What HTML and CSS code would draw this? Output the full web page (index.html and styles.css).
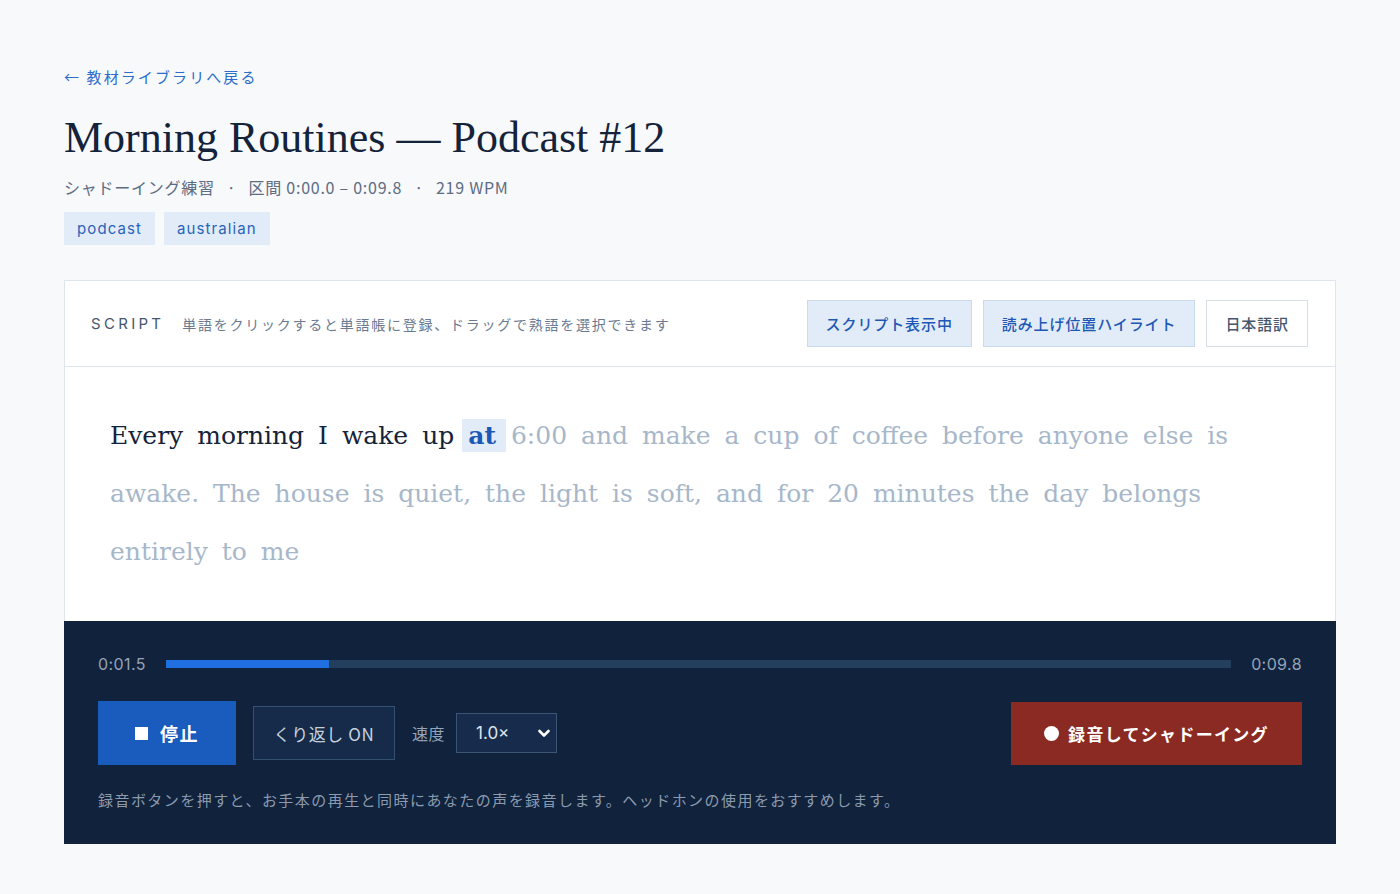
FILE: index.html
```html
<!DOCTYPE html>
<html lang="ja">
<head>
<meta charset="utf-8">
<title>Morning Routines — Podcast #12</title>
<link rel="stylesheet" href="styles.css">
</head>
<body>
<main class="page">
  <a class="back" href="#">← 教材ライブラリへ戻る</a>
  <h1 class="title">Morning Routines — Podcast #12</h1>
  <div class="meta">
    <span>シャドーイング練習</span><span class="dot">·</span><span>区間 0:00.0 – 0:09.8</span><span class="dot">·</span><span>219 WPM</span>
  </div>
  <div class="tags">
    <span class="tag">podcast</span>
    <span class="tag">australian</span>
  </div>

  <section class="card">
    <div class="toolbar">
      <div class="toolbar-left">
        <span class="label">SCRIPT</span>
        <span class="hint">単語をクリックすると単語帳に登録、ドラッグで熟語を選択できます</span>
      </div>
      <div class="toolbar-right">
        <button class="tbtn on">スクリプト表示中</button>
        <button class="tbtn on">読み上げ位置ハイライト</button>
        <button class="tbtn">日本語訳</button>
      </div>
    </div>
    <div class="script">
      <p class="lines"><span class="w done">Every</span> <span class="w done">morning</span> <span class="w done">I</span> <span class="w done">wake</span> <span class="w done">up</span> <span class="w cur">at</span> <span class="w">6:00</span> <span class="w">and</span> <span class="w">make</span> <span class="w">a</span> <span class="w">cup</span> <span class="w">of</span> <span class="w">coffee</span> <span class="w">before</span> <span class="w">anyone</span> <span class="w">else</span> <span class="w">is</span> <span class="w">awake.</span> <span class="w">The</span> <span class="w">house</span> <span class="w">is</span> <span class="w">quiet,</span> <span class="w">the</span> <span class="w">light</span> <span class="w">is</span> <span class="w">soft,</span> <span class="w">and</span> <span class="w">for</span> <span class="w">20</span> <span class="w">minutes</span> <span class="w">the</span> <span class="w">day</span> <span class="w">belongs</span> <span class="w">entirely</span> <span class="w">to</span> <span class="w">me</span></p>
    </div>
    <div class="player">
      <div class="progress-row">
        <span class="time">0:01.5</span>
        <div class="bar"><div class="fill" style="width:15.3%"></div></div>
        <span class="time">0:09.8</span>
      </div>
      <div class="controls">
        <div class="controls-left">
          <button class="pbtn stop"><span class="sq"></span>停止</button>
          <button class="pbtn loop">くり返し ON</button>
          <span class="speed-label">速度</span>
          <div class="select">
            <span>1.0×</span>
            <svg class="chev" width="14" height="14" viewBox="0 0 14 14" aria-hidden="true"><path d="M2.5 5 L7 9.5 L11.5 5" fill="none" stroke="#ffffff" stroke-width="2.6" stroke-linecap="round" stroke-linejoin="round"/></svg>
          </div>
        </div>
        <button class="pbtn rec"><span class="dotc"></span>録音してシャドーイング</button>
      </div>
      <p class="phint">録音ボタンを押すと、お手本の再生と同時にあなたの声を録音します。ヘッドホンの使用をおすすめします。</p>
    </div>
  </section>
</main>
</body>
</html>
```

FILE: styles.css
```css
* { box-sizing: border-box; }
html, body { margin: 0; padding: 0; }
body {
  background: #f7f9fb;
  font-family: "Inter", "Noto Sans CJK JP", "Noto Sans", sans-serif;
  color: #14223a;
}
.page {
  padding: 66px 64px 50px;
}
.back {
  display: block;
  font-size: 15px;
  line-height: 22px;
  color: #2b6ccc;
  text-decoration: none;
  letter-spacing: 2.1px;
  font-family: "Noto Sans CJK JP", sans-serif;
}
.title {
  margin: 23px 0 0;
  font-family: "Liberation Serif", "DejaVu Serif", serif;
  font-weight: 400;
  font-size: 44px;
  line-height: 54px;
  color: #14223a;
  letter-spacing: 0;
}
.meta {
  margin-top: 10px;
  font-size: 16px;
  line-height: 24px;
  color: #5d6c82;
  display: flex;
  align-items: center;
  letter-spacing: 0.75px;
  font-family: "Noto Sans CJK JP", sans-serif;
}
.meta .dot { margin: 0 12px; }
.tags {
  margin-top: 13px;
  display: flex;
  gap: 9px;
}
.tag {
  height: 33px;
  line-height: 33px;
  padding: 0 13px;
  background: #e2ecf8;
  color: #2b63b8;
  font-size: 15px;
  letter-spacing: 1.1px;
  font-family: "Inter", sans-serif;
}
.card {
  margin-top: 35px;
  background: #ffffff;
  border: 1px solid #dfe5ec;
}
.toolbar {
  height: 86px;
  border-bottom: 1px solid #dfe5ec;
  padding: 0 27px 0 26px;
  display: flex;
  align-items: center;
  justify-content: space-between;
}
.toolbar-left {
  display: flex;
  align-items: center;
  gap: 18px;
}
.label {
  font-size: 15px;
  letter-spacing: 3.3px;
  color: #46566d;
  font-family: "Inter", sans-serif;
}
.hint {
  font-size: 14px;
  color: #6b7a90;
  letter-spacing: 1.75px;
  font-family: "Noto Sans CJK JP", sans-serif;
}
.toolbar-right {
  display: flex;
  gap: 11px;
}
.tbtn {
  height: 47px;
  padding: 0 18px;
  font-family: "Noto Sans CJK JP", sans-serif;
  font-size: 15px;
  font-weight: 500;
  letter-spacing: 0.9px;
  background: #ffffff;
  color: #46566d;
  border: 1px solid #d8dee6;
  cursor: pointer;
}
.tbtn.on {
  background: #e2ecf8;
  border-color: #cbd9ec;
  color: #1d58b6;
}
.script {
  padding: 40px 40px 40px 42px;
}
.lines {
  margin: 0;
  font-family: "DejaVu Serif", "Liberation Serif", serif;
  font-size: 25px;
  line-height: 58px;
  color: #a7b7ca;
}
.w {
  padding: 2px 3px;
}
.w.done { color: #14223a; }
.w.cur {
  color: #1d58b6;
  font-weight: 700;
  background: #e2ecf8;
  padding: 2px 10px 2px 6px;
  margin: 0 -6px 0 -3px;
}
.player {
  background: #10223c;
  padding: 32px 34px 33px;
  margin: 0 -1px -1px;
}
.progress-row {
  display: flex;
  align-items: center;
  gap: 20px;
  height: 22px;
}
.time {
  font-size: 16px;
  color: #95a3b6;
  letter-spacing: 0.4px;
  font-family: "Inter", sans-serif;
}
.bar {
  flex: 1;
  height: 8px;
  background: #243e5d;
}
.fill {
  height: 100%;
  background: #1f6fe0;
}
.controls {
  margin-top: 26px;
  display: flex;
  align-items: center;
  justify-content: space-between;
}
.controls-left {
  display: flex;
  align-items: center;
}
.pbtn {
  font-family: "Noto Sans CJK JP", sans-serif;
  border: none;
  cursor: pointer;
  display: flex;
  align-items: center;
  justify-content: center;
}
.stop {
  width: 138px;
  height: 64px;
  background: #1a5bbe;
  color: #ffffff;
  font-size: 18px;
  font-weight: 700;
  gap: 12px;
  letter-spacing: 1.5px;
}
.sq {
  width: 13px;
  height: 13px;
  background: #ffffff;
}
.loop {
  margin-left: 17px;
  width: 142px;
  height: 54px;
  background: #162b49;
  border: 1px solid #34506f;
  color: #c6d1de;
  font-size: 17px;
  letter-spacing: 0.6px;
}
.speed-label {
  margin-left: 17px;
  font-size: 16px;
  color: #97a5b8;
  letter-spacing: 0.5px;
  font-family: "Noto Sans CJK JP", sans-serif;
}
.select {
  margin-left: 11px;
  width: 101px;
  height: 40px;
  background: #172c4c;
  border: 1px solid #3a5576;
  display: flex;
  align-items: center;
  justify-content: space-between;
  padding: 0 5px 0 19px;
  color: #dde5ee;
  font-size: 17px;
  font-family: "Inter", sans-serif;
}
.chev { display: block; }
.rec {
  width: 291px;
  height: 63px;
  background: #8b2a22;
  color: #ffffff;
  font-size: 17px;
  font-weight: 700;
  gap: 9px;
  letter-spacing: 1.3px;
}
.dotc {
  width: 15px;
  height: 15px;
  border-radius: 50%;
  background: #ffffff;
}
.phint {
  margin: 24px 0 0;
  font-size: 15px;
  line-height: 22px;
  color: #8c9aae;
  letter-spacing: 1.45px;
  font-family: "Noto Sans CJK JP", sans-serif;
}
```
